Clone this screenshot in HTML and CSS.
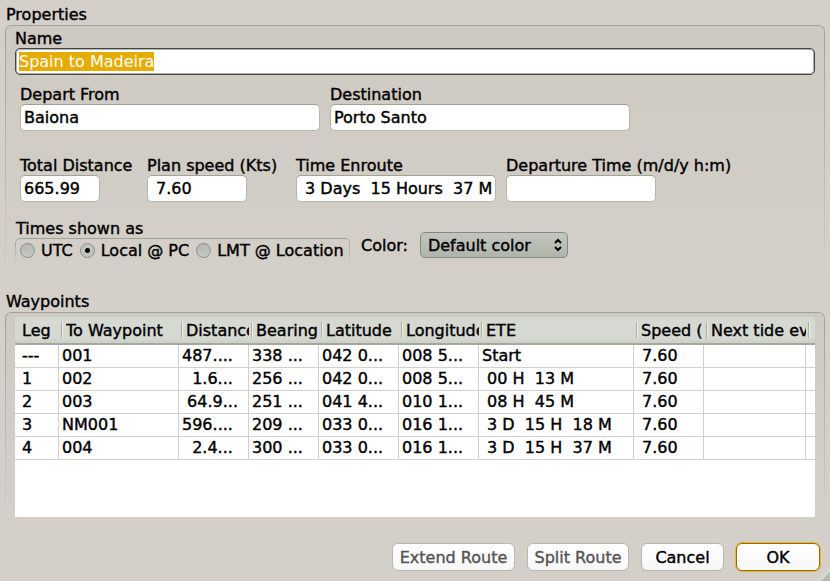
FILE: index.html
```html
<!DOCTYPE html>
<html lang="en">
<head>
<meta charset="utf-8">
<title>Route Properties</title>
<link rel="stylesheet" href="styles.css">
</head>
<body>
<form class="dialog">
  <section class="group">
    <h2 class="group-title">Properties</h2>
    <div class="panel">
      <div class="field">
        <label for="name">Name</label>
        <input id="name" class="text-input" type="text" value="Spain to Madeira" autofocus>
      </div>
      <div class="row places">
        <div class="field"><label for="from">Depart From</label><input id="from" class="text-input" type="text" value="Baiona"></div>
        <div class="field"><label for="to">Destination</label><input id="to" class="text-input" type="text" value="Porto Santo"></div>
      </div>
      <div class="row figures">
        <div class="field"><label for="distance">Total Distance</label><input id="distance" class="text-input short" type="text" value="665.99"></div>
        <div class="field"><label for="speed">Plan speed (Kts)</label><input id="speed" class="text-input medium" type="text" value=" 7.60"></div>
        <div class="field"><label for="enroute">Time Enroute</label><input id="enroute" class="text-input" type="text" value=" 3 Days  15 Hours  37 M"></div>
        <div class="field"><label for="departure">Departure Time (m/d/y h:m)</label><input id="departure" class="text-input long" type="text"></div>
      </div>
      <div class="options">
        <fieldset class="times">
          <legend>Times shown as</legend>
          <div class="radios">
            <label><input type="radio" name="tz">UTC</label>
            <label><input type="radio" name="tz" checked>Local @ PC</label>
            <label><input type="radio" name="tz">LMT @ Location</label>
          </div>
        </fieldset>
        <div class="color">
          <label for="color">Color:</label>
          <span class="select-wrap">
            <select id="color"><option>Default color</option></select>
            <svg class="arrows" viewBox="0 0 8 14" width="8" height="14"><path d="M1 5 L4 2 L7 5 M1 9 L4 12 L7 9"/></svg>
          </span>
        </div>
      </div>
    </div>
  </section>

  <section class="group waypoints">
    <h2 class="group-title">Waypoints</h2>
    <div class="panel">
      <div class="list">
        <table>
          <colgroup>
            <col class="c-leg"><col class="c-name"><col class="c-small"><col class="c-small"><col class="c-coord"><col class="c-coord"><col class="c-ete"><col class="c-small"><col class="c-tide"><col>
          </colgroup>
          <thead>
            <tr><th><span>Leg</span></th><th><span>To Waypoint</span></th><th><span>Distance</span></th><th><span>Bearing</span></th><th><span>Latitude</span></th><th><span>Longitude</span></th><th><span>ETE</span></th><th><span>Speed (</span></th><th><span>Next tide ev</span></th><th></th></tr>
          </thead>
          <tbody>
            <tr><td>---</td><td>001</td><td>487....</td><td>338 ...</td><td>042 0...</td><td>008 5...</td><td>Start</td><td> 7.60</td><td></td><td></td></tr>
            <tr><td>1</td><td>002</td><td>  1.6...</td><td>256 ...</td><td>042 0...</td><td>008 5...</td><td> 00 H  13 M</td><td> 7.60</td><td></td><td></td></tr>
            <tr><td>2</td><td>003</td><td> 64.9...</td><td>251 ...</td><td>041 4...</td><td>010 1...</td><td> 08 H  45 M</td><td> 7.60</td><td></td><td></td></tr>
            <tr><td>3</td><td>NM001</td><td>596....</td><td>209 ...</td><td>033 0...</td><td>016 1...</td><td> 3 D  15 H  18 M</td><td> 7.60</td><td></td><td></td></tr>
            <tr><td>4</td><td>004</td><td>  2.4...</td><td>300 ...</td><td>033 0...</td><td>016 1...</td><td> 3 D  15 H  37 M</td><td> 7.60</td><td></td><td></td></tr>
          </tbody>
        </table>
      </div>
    </div>
  </section>

  <footer class="actions">
    <button class="extend" type="button" disabled>Extend Route</button>
    <button class="split" type="button" disabled>Split Route</button>
    <button class="cancel" type="button">Cancel</button>
    <button class="ok" type="submit">OK</button>
  </footer>
  <svg class="grip" viewBox="0 0 14 14" width="14" height="14"><path class="grip-edge" d="M14 0 L0 14 H14 Z"/><path class="grip-face" d="M14 5 L5 14 H14 Z"/></svg>
</form>
<script>document.getElementById("name").select();</script>
</body>
</html>
```
FILE: styles.css
```css
* { box-sizing: border-box; }

body {
  margin: 0;
  background: #d4cfc8;
  color: #000;
  font-family: "DejaVu Sans", sans-serif;
  font-size: 16px;
  line-height: 19px;
  -webkit-text-stroke: 0.4px currentColor;
}

input, select, button { font: inherit; color: inherit; -webkit-text-stroke: inherit; }

.dialog {
  position: relative;
  display: flex;
  flex-direction: column;
  min-height: 100vh;
  padding: 5px 5px 10px;
}

.group-title { margin: 0; padding-left: 1px; font-size: 16px; font-weight: 400; line-height: 20px; }

.panel {
  position: relative;
  padding: 4px 10px 16px;
  background: linear-gradient(#cec9c1, #d4cfc8);
  border-radius: 6px 6px 0 0;
}
.panel::before {
  content: "";
  position: absolute;
  inset: 0;
  border: 1px solid #9ea297;
  border-bottom: 0;
  border-radius: 6px 6px 0 0;
  mask-image: linear-gradient(#000, transparent);
  pointer-events: none;
}

.field { display: flex; flex-direction: column; min-width: 0; }

.text-input {
  width: 100%;
  height: 27px;
  padding: 0 3px;
  border: 1px solid #b3b8aa;
  border-top-color: #9ea297;
  border-radius: 5px;
  background: #fff;
  outline: 0;
}
.text-input:focus { border-color: #444; box-shadow: inset 0 0 0 1px #b0b0b0; }
.text-input::selection { background: rgba(229, 172, 0, 0.996); color: #fff; }
.short { width: 80px; }
.medium { width: 100px; }
.long { width: 150px; }

.row { display: grid; column-gap: 10px; padding-left: 5px; }
.places { grid-template-columns: 300px 300px; margin-top: 10px; }
.figures { grid-template-columns: 117px 139px 200px 1fr; margin-top: 25px; white-space: nowrap; }

.options { display: flex; align-items: flex-start; gap: 11px; margin-top: 17px; }
.times { margin: 0; padding: 0; border: 0; min-width: 0; }
.times legend { padding: 0 0 0 1px; }
.radios {
  display: flex;
  gap: 7px;
  padding: 3px 5px;
  width: 335px;
  position: relative;
  white-space: nowrap;
}
.radios::before {
  content: "";
  position: absolute;
  inset: 0;
  border: 1px solid #9ea297;
  border-bottom: 0;
  border-radius: 5px 5px 0 0;
  mask-image: linear-gradient(#000, transparent);
  pointer-events: none;
}
.radios label { display: flex; align-items: center; gap: 6px; }
.radios input {
  appearance: none;
  width: 15px;
  height: 15px;
  margin: 0;
  border: 1px solid #8b8f86;
  border-radius: 50%;
  background: linear-gradient(#b4b8b0, #c6cac2);
}
.radios input:checked { background: radial-gradient(circle, #000 2px, transparent 3px), #c0c4bc; }

.color { display: flex; align-items: center; gap: 12px; margin-top: 13px; }
.select-wrap { position: relative; }
.select-wrap select {
  display: block;
  appearance: none;
  width: 148px;
  height: 26px;
  padding: 0 7px;
  border: 1px solid #858a80;
  border-radius: 5px;
  background: linear-gradient(#c2c6be, #b0b5ac);
}
.arrows { position: absolute; right: 6px; top: 6px; fill: none; stroke: #000; stroke-width: 2; pointer-events: none; }

.waypoints { display: flex; flex: 1; flex-direction: column; margin-top: 13px; }
.waypoints .panel { display: flex; flex: 1; padding: 5px 10px 0; }
.list { flex: 1; min-width: 0; overflow: hidden; background: #fff; }

table { width: 100%; table-layout: fixed; border-collapse: separate; border-spacing: 0; white-space: pre; }
.c-leg { width: 44px; }
.c-name { width: 120px; }
.c-small { width: 70px; }
.c-coord { width: 80px; }
.c-ete { width: 155px; }
.c-tide { width: 102px; }

th {
  height: 28px;
  padding: 0 0 0 7px;
  border-bottom: 2px solid #a3a99f;
  background:
    linear-gradient(90deg, #a9aea5 1px, #eef0ec 1px) 2px 5px / 2px 16px no-repeat,
    linear-gradient(#d5d9d1 80%, #cbd0c7);
  font-weight: 400;
  text-align: left;
}
th:first-child { background: linear-gradient(#d5d9d1 80%, #cbd0c7); }
th span { display: block; overflow: hidden; }
td {
  height: 23px;
  padding: 0 0 0 3px;
  border-right: 1px solid #d0d0cc;
  border-bottom: 1px solid #d0d0cc;
  line-height: 22px;
}
td:first-child, th:first-child { padding-left: 7px; }
td:last-child { border-right: 0; }

.actions { display: flex; justify-content: flex-end; gap: 12px; margin-top: 26px; padding-right: 5px; }
.actions button {
  height: 28px;
  padding: 0;
  border: 1px solid #b5b8b1;
  border-radius: 6px;
  background: linear-gradient(#fff, #f7f7f7);
  white-space: nowrap;
}
.actions button:disabled { color: #555; }
.extend { width: 123px; }
.split { width: 102px; }
.cancel { width: 83px; }
.actions .ok { width: 84px; border: 1px solid #8f6b10; box-shadow: 0 0 0 1px #eab82e; }

.grip { position: absolute; right: 0; bottom: 0; }
.grip-edge { fill: #d3d8cf; }
.grip-face { fill: #b4b9b0; }
```
